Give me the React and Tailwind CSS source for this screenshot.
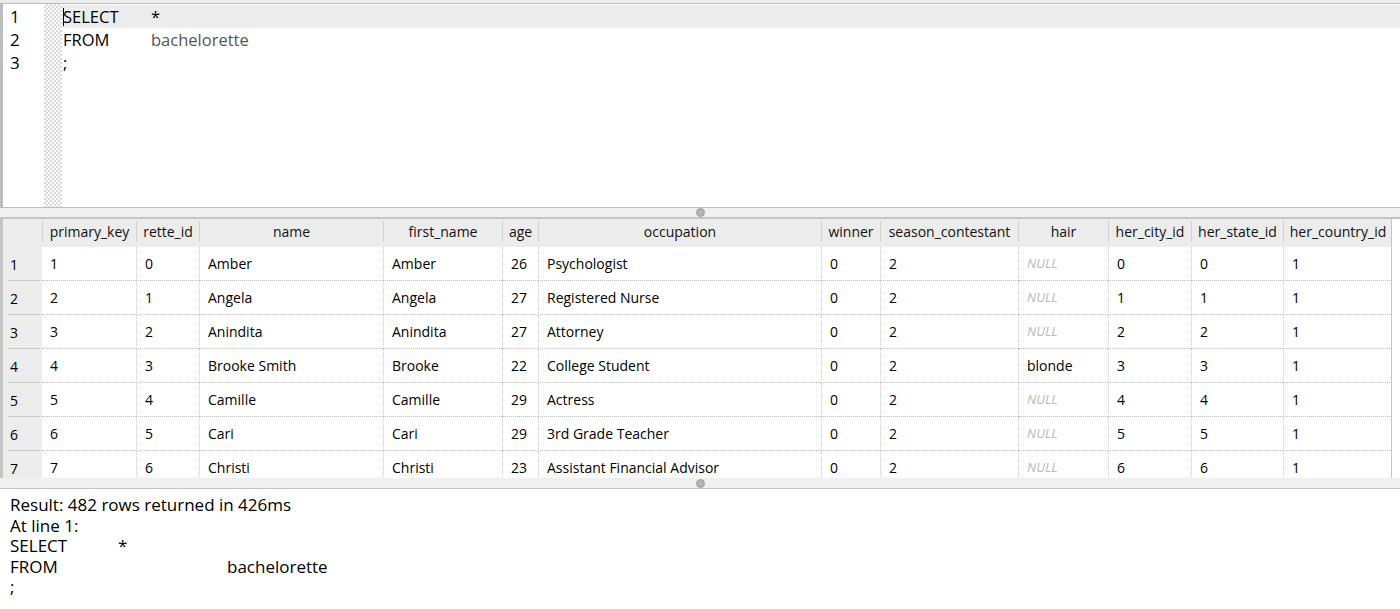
import React from 'react';

const columns = [
    'primary_key', 'rette_id', 'name', 'first_name', 'age', 'occupation',
    'winner', 'season_contestant', 'hair', 'her_city_id', 'her_state_id', 'her_country_id',
];

const rows = [
    ['1', '0', 'Amber', 'Amber', '26', 'Psychologist', '0', '2', null, '0', '0', '1'],
    ['2', '1', 'Angela', 'Angela', '27', 'Registered Nurse', '0', '2', null, '1', '1', '1'],
    ['3', '2', 'Anindita', 'Anindita', '27', 'Attorney', '0', '2', null, '2', '2', '1'],
    ['4', '3', 'Brooke Smith', 'Brooke', '22', 'College Student', '0', '2', 'blonde', '3', '3', '1'],
    ['5', '4', 'Camille', 'Camille', '29', 'Actress', '0', '2', null, '4', '4', '1'],
    ['6', '5', 'Cari', 'Cari', '29', '3rd Grade Teacher', '0', '2', null, '5', '5', '1'],
    ['7', '6', 'Christi', 'Christi', '23', 'Assistant Financial Advisor', '0', '2', null, '6', '6', '1'],
];

const gridCols = 'grid grid-cols-[39px_94px_63px_184px_119px_36px_283px_59px_138px_90px_83px_92px_109px]';

const font = { fontFamily: '"Open Sans", "DejaVu Sans", sans-serif' };

const Splitter = ({ h }) => (
    <div className={`${h} bg-[#f0f0f0] flex items-center justify-center border-b border-[#c4c4c4]`}>
        <span className="w-[9px] h-[9px] rounded-full bg-[#b4b4b4] border border-[#a0a0a0]" />
    </div>
);

const Editor = () => {
    const lines = [
        { n: 1, a: 'SELECT', b: '*', bColor: 'text-black' },
        { n: 2, a: 'FROM', b: 'bachelorette', bColor: 'text-[#555]' },
        { n: 3, a: ';', b: '' },
    ];
    return (
        <div className="h-[208px] bg-[#ececec] pt-[3px]">
            <div className="h-[205px] bg-white border-t border-l-[3px] border-[#bdbdbd] border-b flex">
                {/* gutter */}
                <div className="w-[41px] pt-[1px]">
                    {lines.map((l) => (
                        <div key={l.n} className="h-[23px] leading-[23px] pl-[7px] text-[17px] font-medium text-black">{l.n}</div>
                    ))}
                </div>
                <div className="w-[18px] bg-[image:repeating-conic-gradient(#d9d9d9_0_25%,#ffffff_0_50%)] bg-size-[4px_4px]" />
                {/* code */}
                <div className="flex-1 pt-[1px]">
                    {lines.map((l) => (
                        <div
                            key={l.n}
                            className={`h-[23px] leading-[23px] flex text-[16.5px] pl-[1px] ${l.n === 1 ? 'bg-[#ececec] relative' : ''}`}
                        >
                            {l.n === 1 && <span className="absolute left-[1px] top-[3px] w-px h-[18px] bg-black" />}
                            <span className="w-[88px] text-black">{l.a}</span>
                            <span className={l.bColor}>{l.b}</span>
                        </div>
                    ))}
                </div>
            </div>
        </div>
    );
};

const ResultsTable = () => (
    <div className="h-[260px] overflow-hidden bg-white border-t border-[#c4c4c4] border-l-[3px] border-l-[#c4c4c4]">
        <div className="w-[1389px] border-r border-[#c4c4c4] h-full">
            {/* header */}
            <div className={`${gridCols} h-[28px] bg-[#ececec] text-[14px] text-[#111]`}>
                <div />
                {columns.map((c) => (
                    <div key={c} className="flex items-center justify-center border-l border-[#d2d2d2] mt-[2px] mb-[5px] whitespace-nowrap">
                        {c}
                    </div>
                ))}
            </div>
            {/* body */}
            {rows.map((r, i) => (
                <div key={i} className={`${gridCols} h-[34px] text-[14px] text-black`}>
                    <div className="bg-[#ececec] flex items-center pl-[7px] relative">
                        {i + 1}
                        <span className="absolute left-[5px] right-[2px] bottom-0 h-px bg-[#c8c8c8]" />
                    </div>
                    {r.map((v, j) => (
                        <div
                            key={j}
                            className={`flex items-center pl-[8px] whitespace-nowrap border-b border-dotted border-b-[#bdbdbd] ${j === 0 ? '' : 'border-l border-l-[#cfcfcf]'}`}
                        >
                            {v === null ? (
                                <span className="italic text-[13px] text-[#b8b8b8]">NULL</span>
                            ) : (
                                v
                            )}
                        </div>
                    ))}
                </div>
            ))}
        </div>
    </div>
);

const Message = () => (
    <div className="flex-1 bg-white pl-[10px] pt-[6px] text-[17px] leading-[20.5px] text-black">
        <div>Result: 482 rows returned in 426ms</div>
        <div>At line 1:</div>
        <div className="flex">
            <span className="w-[108px]">SELECT</span>
            <span>*</span>
        </div>
        <div className="flex">
            <span className="w-[217px]">FROM</span>
            <span>bachelorette</span>
        </div>
        <div>;</div>
    </div>
);

export default function App() {
    return (
        <div className="w-[1400px] h-[609px] flex flex-col bg-white overflow-hidden" style={font}>
            <Editor />
            <Splitter h="h-[10px]" />
            <ResultsTable />
            <Splitter h="h-[11px]" />
            <Message />
        </div>
    );
}
